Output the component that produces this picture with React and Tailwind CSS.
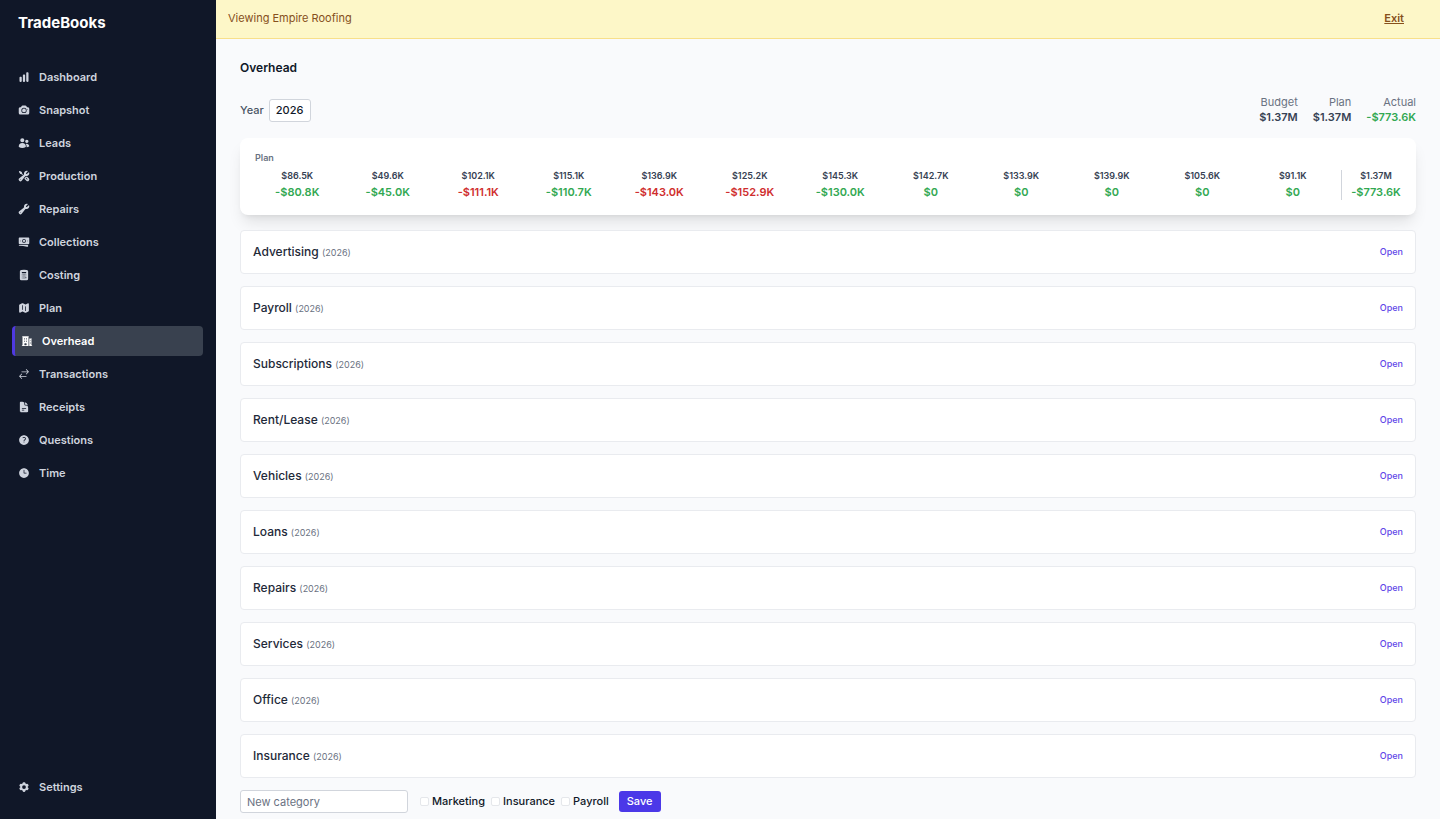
import React from 'react';
import {
    HiChartBar,
    HiCamera,
    HiUsers,
    HiWrenchScrewdriver,
    HiWrench,
    HiBanknotes,
    HiCalculator,
    HiMap,
    HiBuildingOffice2,
    HiArrowsRightLeft,
    HiDocumentText,
    HiQuestionMarkCircle,
    HiClock,
    HiCog6Tooth,
} from 'react-icons/hi2';

const navItems = [
    { label: 'Dashboard', icon: HiChartBar },
    { label: 'Snapshot', icon: HiCamera },
    { label: 'Leads', icon: HiUsers },
    { label: 'Production', icon: HiWrenchScrewdriver },
    { label: 'Repairs', icon: HiWrench },
    { label: 'Collections', icon: HiBanknotes },
    { label: 'Costing', icon: HiCalculator },
    { label: 'Plan', icon: HiMap },
    { label: 'Overhead', icon: HiBuildingOffice2, active: true },
    { label: 'Transactions', icon: HiArrowsRightLeft },
    { label: 'Receipts', icon: HiDocumentText },
    { label: 'Questions', icon: HiQuestionMarkCircle },
    { label: 'Time', icon: HiClock },
];

const months = [
    { plan: '$86.5K', actual: '-$80.8K' },
    { plan: '$49.6K', actual: '-$45.0K' },
    { plan: '$102.1K', actual: '-$111.1K', over: true },
    { plan: '$115.1K', actual: '-$110.7K' },
    { plan: '$136.9K', actual: '-$143.0K', over: true },
    { plan: '$125.2K', actual: '-$152.9K', over: true },
    { plan: '$145.3K', actual: '-$130.0K' },
    { plan: '$142.7K', actual: '$0' },
    { plan: '$133.9K', actual: '$0' },
    { plan: '$139.9K', actual: '$0' },
    { plan: '$105.6K', actual: '$0' },
    { plan: '$91.1K', actual: '$0' },
];

const totals = [
    { label: 'Budget', value: '$1.37M', color: 'text-gray-700' },
    { label: 'Plan', value: '$1.37M', color: 'text-gray-700' },
    { label: 'Actual', value: '-$773.6K', color: 'text-[#32a852]' },
];

const categories = [
    'Advertising',
    'Payroll',
    'Subscriptions',
    'Rent/Lease',
    'Vehicles',
    'Loans',
    'Repairs',
    'Services',
    'Office',
    'Insurance',
];

const NavLink = ({ label, icon: Icon, active }) => (
    <a
        href="#"
        className={`flex h-[30px] items-center gap-[9px] rounded text-[11px] font-semibold ${
            active ? 'border-l-[3px] border-[#4f39e0] bg-[#39414f] pl-1.5 text-white' : 'pl-1.5 text-[#cfd4de]'
        }`}
    >
        <Icon size={12} />
        {label}
    </a>
);

const Sidebar = () => (
    <aside className="flex w-[216px] shrink-0 flex-col bg-[#101728] pr-[13px] pb-[17px] pl-3">
        <div className="px-1.5 pt-3 text-[15px] leading-[22px] font-bold text-white">TradeBooks</div>
        <nav className="mt-7 flex flex-1 flex-col gap-[3px]">
            {navItems.map((item) => (
                <NavLink key={item.label} {...item} />
            ))}
        </nav>
        <NavLink label="Settings" icon={HiCog6Tooth} />
    </aside>
);

const MonthCell = ({ plan, actual, over }) => (
    <div className="text-center">
        <div className="text-[9px] leading-3 font-semibold text-gray-700">{plan}</div>
        <div className={`mt-0.5 text-[11px] leading-4 font-semibold ${over ? 'text-[#cf2e2e]' : 'text-[#32a852]'}`}>
            {actual}
        </div>
    </div>
);

const PlanCard = () => (
    <section className="mt-[13px] rounded-lg bg-white p-[15px] pt-[13px] shadow-lg">
        <h2 className="text-[9px] leading-[14px] font-semibold text-gray-500">Plan</h2>
        <div className="mt-[5px] grid grid-cols-[repeat(12,minmax(0,1fr))_60px] gap-1.5">
            {months.map((month) => (
                <MonthCell key={month.plan} {...month} />
            ))}
            <div className="flex flex-col items-center border-l border-gray-300 pl-[9px]">
                <MonthCell plan="$1.37M" actual="-$773.6K" />
            </div>
        </div>
    </section>
);

const CategoryRow = ({ name }) => (
    <div className="flex h-11 items-center justify-between rounded border border-[#e9ebef] bg-white px-3">
        <h3 className="text-[12px] font-medium text-gray-800">
            {name} <span className="text-[9px] font-normal text-gray-500">(2026)</span>
        </h3>
        <button type="button" className="text-[9px] font-medium text-[#5f47e8]">
            Open
        </button>
    </div>
);

const NewCategoryForm = () => (
    <form className="mt-3 flex items-center" onSubmit={(e) => e.preventDefault()}>
        <input
            type="text"
            aria-label="New category"
            placeholder="New category"
            className="h-[23px] w-[168px] rounded-[3px] border border-gray-300 bg-white px-1.5 text-[11px] placeholder:text-gray-500"
        />
        <div className="ml-3 flex gap-1.5">
            {['Marketing', 'Insurance', 'Payroll'].map((flag) => (
                <label key={flag} className="flex items-center gap-[3px] text-[11px] font-medium text-gray-900">
                    <input
                        type="checkbox"
                        className="size-[9px] appearance-none rounded-xs border border-gray-200 bg-white checked:bg-[#4f39e8]"
                    />
                    {flag}
                </label>
            ))}
        </div>
        <button type="submit" className="ml-[10px] h-[21px] rounded-[3px] bg-[#4b38e8] px-2 text-[11px] font-medium text-white">
            Save
        </button>
    </form>
);

const App = () => {
    return (
        <div className="flex min-h-screen bg-[#f9fafc] font-[Inter,sans-serif]">
            <Sidebar />
            <div className="flex min-w-0 flex-1 flex-col">
                {/* Impersonation banner */}
                <div className="flex h-[39px] items-start justify-between border-b border-[#f8e08a] bg-[#fdf7c8] pt-2.5 pr-9 pl-3 text-[11px] leading-4 text-[#86501c]">
                    <span>Viewing Empire Roofing</span>
                    <a href="#" className="font-semibold underline">
                        Exit
                    </a>
                </div>

                <main className="px-6 pt-5">
                    <h1 className="text-[12px] leading-[18px] font-semibold text-gray-900">Overhead</h1>

                    <div className="mt-[18px] flex items-center justify-between">
                        <div className="flex items-center gap-[5px] text-[11px] font-medium">
                            <label htmlFor="year" className="text-gray-600">
                                Year
                            </label>
                            <select
                                id="year"
                                defaultValue="2026"
                                className="h-[23px] appearance-none rounded-[3px] border border-gray-300 bg-white px-1.5 text-[11px] text-gray-900"
                            >
                                <option>2026</option>
                            </select>
                        </div>
                        <div className="flex gap-[15px] text-right text-[11px] leading-[15px]">
                            {totals.map((total) => (
                                <div key={total.label}>
                                    <div className="text-gray-500">{total.label}</div>
                                    <div className={`font-semibold ${total.color}`}>{total.value}</div>
                                </div>
                            ))}
                        </div>
                    </div>

                    <PlanCard />

                    <div className="mt-[15px] flex flex-col gap-3">
                        {categories.map((name) => (
                            <CategoryRow key={name} name={name} />
                        ))}
                    </div>

                    <NewCategoryForm />
                </main>
            </div>
        </div>
    );
};

export default App;
